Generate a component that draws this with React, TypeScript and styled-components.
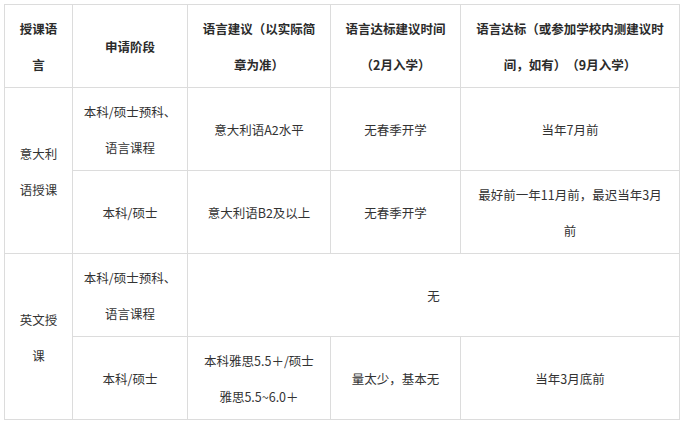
import React from "react";
import styled, { createGlobalStyle } from "styled-components";

const Global = createGlobalStyle`
  html, body { margin: 0; padding: 0; background: #ffffff; }
  body {
    font-family: "Microsoft YaHei", "Noto Sans CJK SC", "Noto Sans", sans-serif;
    color: #333333;
    text-spacing-trim: space-all;
  }
`;

const Page = styled.div`
  padding: 4px 3px 4px 4px;
  width: 676px;
`;

const Table = styled.table`
  width: 676px;
  table-layout: fixed;
  border-collapse: collapse;
  font-size: 12.5px;
  line-height: 36px;
  text-spacing-trim: space-all;
`;

const Row = styled.tr`
  height: 83px;
`;

const Head = styled.th`
  border: 1px solid #dcdcdc;
  padding: 2px 10px 0;
  font-weight: bold;
  color: #2b2b2b;
  text-align: center;
  vertical-align: middle;
`;

const Cell = styled.td`
  border: 1px solid #dcdcdc;
  padding: 2px 10px 0;
  font-weight: normal;
  color: #333333;
  text-align: center;
  vertical-align: middle;
`;

const widths = [68, 115, 143, 130, 219];

export default function App() {
  return (
    <>
      <Global />
      <Page>
        <Table>
          <colgroup>
            {widths.map((w, i) => (
              <col key={i} style={{ width: w }} />
            ))}
          </colgroup>
          <tbody>
            <Row>
              <Head>授课语<br />言</Head>
              <Head>申请阶段</Head>
              <Head>语言建议（以实际简<br />章为准）</Head>
              <Head>语言达标建议时间<br />（2月入学）</Head>
              <Head>语言达标（或参加学校内测建议时<br />间，如有）（9月入学）</Head>
            </Row>
            <Row>
              <Cell rowSpan={2}>意大利<br />语授课</Cell>
              <Cell>本科/硕士预科、<br />语言课程</Cell>
              <Cell>意大利语A2水平</Cell>
              <Cell>无春季开学</Cell>
              <Cell>当年7月前</Cell>
            </Row>
            <Row>
              <Cell>本科/硕士</Cell>
              <Cell>意大利语B2及以上</Cell>
              <Cell>无春季开学</Cell>
              <Cell>最好前一年11月前，最迟当年3月<br />前</Cell>
            </Row>
            <Row>
              <Cell rowSpan={2}>英文授<br />课</Cell>
              <Cell>本科/硕士预科、<br />语言课程</Cell>
              <Cell colSpan={3}>无</Cell>
            </Row>
            <Row>
              <Cell>本科/硕士</Cell>
              <Cell>本科雅思5.5＋/硕士<br />雅思5.5~6.0＋</Cell>
              <Cell>量太少，基本无</Cell>
              <Cell>当年3月底前</Cell>
            </Row>
          </tbody>
        </Table>
      </Page>
    </>
  );
}
